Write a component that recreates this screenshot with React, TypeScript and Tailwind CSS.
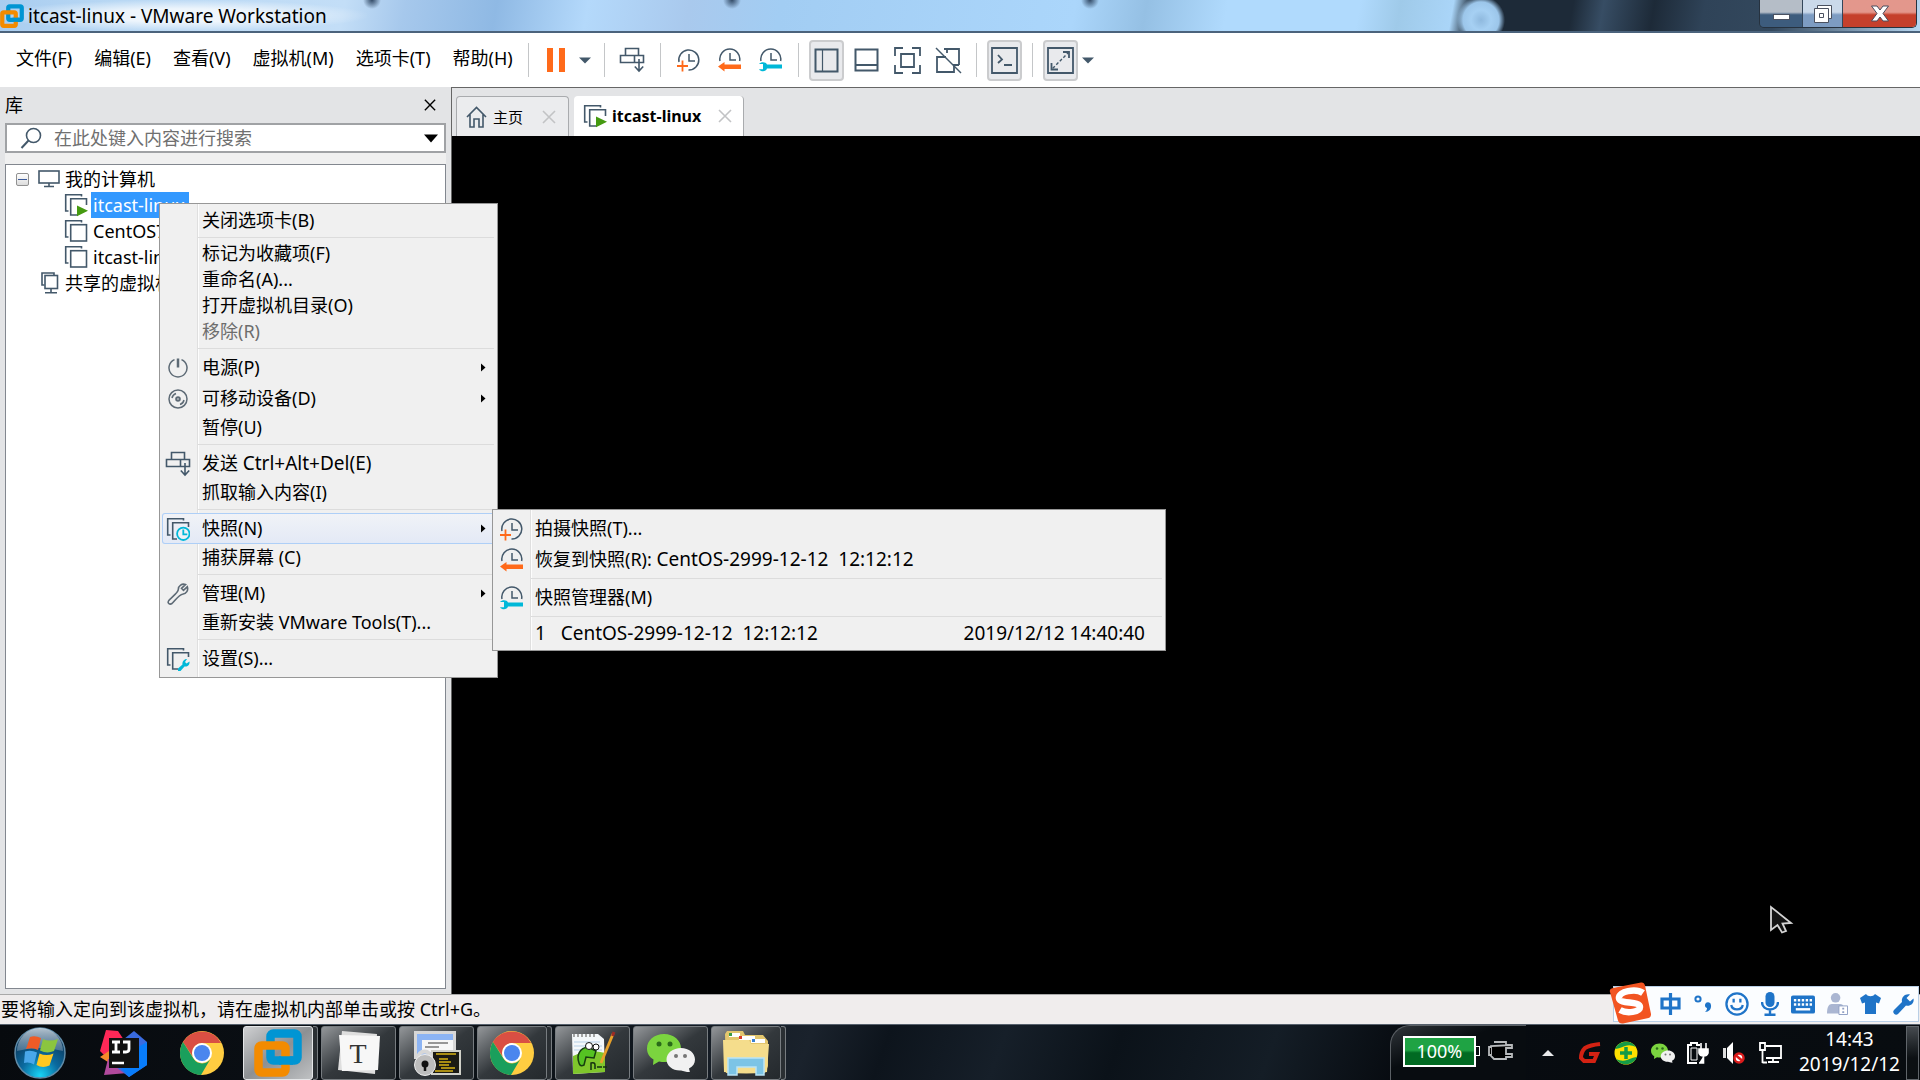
import React from 'react';

const INK = '#43586a';
const ORANGE = '#ff6a1a';
const CYAN = '#00b8d8';

type IconProps = { className?: string };

/* ---------- VMware line icons ---------- */

function VmLogo({ className }: IconProps) {
  return (
    <svg viewBox="0 0 48 48" className={className} fill="none" strokeWidth="8.500" aria-hidden="true">
      <rect x="16.500" y="4.500" width="27" height="27" rx="3" stroke="#0095d3" />
      <rect x="4.500" y="16.500" width="27" height="27" rx="3" stroke="#f38b00" />
      <path d="M25 31.500h14" stroke="#0095d3" />
    </svg>
  );
}

function VmIcon({ badge, className }: { badge?: 'play' | 'clock' | 'wrench'; className?: string }) {
  return (
    <svg width="24" height="24" viewBox="0 0 24 24" className={className} fill="none" stroke={INK} strokeWidth="1.600" aria-hidden="true">
      <path d="M4.500 18H1.700V1.700H17.500V3.500" />
      {badge === 'play' && <path d="M14 22H6.700V5.700H22.500V12" />}
      {badge === 'clock' && <path d="M11 22H6.700V5.700H22.500V10" />}
      {badge === 'wrench' && <path d="M12 22H6.700V5.700H22.500V10" />}
      {!badge && <rect x="6.700" y="5.700" width="15.800" height="16.300" />}
      {badge === 'play' && <path d="M13 12.500 24 17.800 13 23.200Z" fill="#459a10" stroke="none" />}
      {badge === 'clock' && (
        <g stroke={CYAN} strokeWidth="1.800">
          <circle cx="17.300" cy="16.800" r="6.200" fill="#eef1f6" />
          <path d="M17.300 12.500v4.800h4" />
        </g>
      )}
      {badge === 'wrench' && (
        <path d="M12 21.500 16.500 17.500C16 14.500 18 12 21 12l-2 3 1.500 1.500L23.500 14.500C24 18 21.500 20 18.500 19.500L14.500 24h-2.500Z" fill={CYAN} stroke="none" />
      )}
    </svg>
  );
}

function MonitorIcon() {
  return (
    <svg width="22" height="18" viewBox="0 0 22 18" fill="none" stroke={INK} strokeWidth="1.600" aria-hidden="true">
      <rect x="1" y="1" width="20" height="12" />
      <path d="M11 13v3M6 16.500h10" />
    </svg>
  );
}

function SharedIcon() {
  return (
    <svg width="18" height="22" viewBox="0 0 18 22" fill="none" stroke={INK} strokeWidth="1.600" aria-hidden="true">
      <path d="M3.500 13H1V1h12v2.500" />
      <rect x="4" y="3.500" width="12.500" height="13" />
      <path d="M10 17v3.500M4 20.800h12" />
    </svg>
  );
}

function SendKeysIcon() {
  return (
    <svg width="26" height="26" viewBox="0 0 26 26" fill="none" stroke={INK} strokeWidth="1.600" aria-hidden="true">
      <path d="M6.500 8.500V1.500h13v7M1.500 8.500h23v7h-23zM15.500 8.500v7M20 12v11M15.800 19.500 20 24l4.200-4.500" />
    </svg>
  );
}

function ClockIcon({ kind }: { kind: 'add' | 'revert' | 'manage' }) {
  return (
    <svg width="24" height="24" viewBox="0 0 24 24" fill="none" stroke={INK} strokeWidth="1.500" aria-hidden="true">
      {kind === 'add' ? (
        <>
          <path d="M3 14A10 10 0 1 1 12.500 22" />
          <path d="M13 6v7h6" />
          <path d="M6.500 12.500v11M1 18h11" stroke={ORANGE} strokeWidth="1.800" />
        </>
      ) : (
        <>
          <path d="M3 13A10 10 0 1 1 22.600 13" />
          <path d="M13 5v7h6" />
        </>
      )}
      {kind === 'revert' && <path d="M1 18.500 7.500 14v2.500H24v4.500H7.500v2.500Z" fill={ORANGE} stroke="none" />}
      {kind === 'manage' && (
        <path d="M1 16C3 13.500 8 13.700 9 16.500H24v4H9C8 24 3 24.200 1 21.200H5v-5.200Z" fill={CYAN} stroke="none" />
      )}
    </svg>
  );
}

function PowerIcon() {
  return (
    <svg width="20" height="20" viewBox="0 0 20 20" fill="none" stroke="#5d6a75" strokeWidth="1.500" aria-hidden="true">
      <path d="M6.500 1.600a9 9 0 1 0 7 0" />
      <path d="M10 .5v9" strokeWidth="2.500" />
    </svg>
  );
}

function DiscIcon() {
  return (
    <svg width="20" height="20" viewBox="0 0 20 20" fill="none" stroke="#5d6a75" strokeWidth="1.500" aria-hidden="true">
      <circle cx="10" cy="10" r="9" />
      <circle cx="10" cy="10" r="1.800" strokeWidth="2" />
      <path d="M4 9a6 6 0 0 1 4-4.500M16 11a6 6 0 0 1-4 4.500" />
    </svg>
  );
}

function WrenchIcon() {
  return (
    <svg width="22" height="22" viewBox="0 0 22 22" fill="none" stroke="#5d6a75" strokeWidth="1.600" aria-hidden="true">
      <path d="M18.500 1.500C15 .3 11.300 2.500 11.300 6.500c0 3.500-8.500 9-9.800 11.500-1.200 2.300 1.200 4 3.500 2.500 2.500-2 7-9 10.500-9.300 4-.2 6-4 4.800-7.500L16.500 7.300l-2-2z" />
    </svg>
  );
}

function Caret({ className }: IconProps) {
  return (
    <svg width="12" height="7" viewBox="0 0 12 7" className={className} aria-hidden="true">
      <path d="M0 .5h12L6 6.500Z" fill="currentColor" />
    </svg>
  );
}

function Cross({ className, size = 14 }: IconProps & { size?: number }) {
  return (
    <svg width={size} height={size} viewBox="0 0 14 14" className={className} fill="none" stroke="currentColor" strokeWidth="1.600" aria-hidden="true">
      <path d="M1 1l12 12M13 1 1 13" />
    </svg>
  );
}

/* ---------- Title bar ---------- */

function TitleBar() {
  return (
    <header className="flex h-[33px] shrink-0 justify-between overflow-hidden border-b-2 border-[#4b637c] bg-[radial-gradient(circle_at_1481px_20px,#8fb9de_0,#a6d0f3_10px,#9cc6ea_18px,transparent_24px),radial-gradient(ellipse_at_760px_24px,#3f9b96_0,#5aa6b8_9px,transparent_15px),radial-gradient(circle_at_372px_0px,#324a66_0,transparent_9px),radial-gradient(circle_at_732px_0px,#324a66_0,transparent_9px),radial-gradient(circle_at_1090px_0px,#324a66_0,transparent_9px),radial-gradient(ellipse_at_403px_28px,#5b9bd0_0,transparent_12px),radial-gradient(ellipse_at_1120px_30px,#4d8cc4_0,transparent_14px),linear-gradient(100deg,#a9cdf0_0,#b9d8f4_120px,#c3def7_340px,#a6c8ec_400px,#8fb9e4_490px,#b4d9fb_580px,#a9c9ed_680px,#a2cdf3_770px,#abd6fb_1060px,#95c0e4_1130px,#b0dafd_1210px,#b0dafd_1340px,#9fcae9_1380px,#aad5f8_1432px,#1d2a38_1450px,#1d2a38_1550px,#374d64_1580px,#1d2a38_1630px,#2f4358_1680px,#33485d_1750px,#bcdcf6_1900px)]">
      <div className="flex items-center bg-[radial-gradient(ellipse_at_center,rgba(255,255,255,0.75)_30%,transparent_72%)] pr-10">
        <VmLogo className="size-6" />
        <h1 className="ml-1 text-[19px] leading-6 whitespace-nowrap text-black">itcast-linux - VMware Workstation</h1>
      </div>
      <div className="mr-[3px] flex h-7 overflow-hidden rounded-b-[5px] border border-t-0 border-[#26323f]">
        <button aria-label="最小化" className="flex w-[43px] items-end justify-center border-r border-[#33465a] bg-linear-to-b from-[#b5bdc7] from-45% to-[#3d5c7d] to-55% pb-[7px]">
          <span className="h-[6px] w-[17px] border border-[#4a5160] bg-white" />
        </button>
        <button aria-label="还原" className="flex w-10 items-center justify-center border-r border-[#33465a] bg-linear-to-b from-[#cad9ea] from-45% to-[#7d9cc2] to-55%">
          <svg width="20" height="20" viewBox="0 0 20 20" fill="#fff" stroke="#4a5160" aria-hidden="true">
            <path d="M4.500 1.500h14v13h-14z" />
            <path fillRule="evenodd" d="M1.500 4.500h14v14h-14zM6.500 9.500v4h4v-4z" />
          </svg>
        </button>
        <button aria-label="关闭" className="flex w-[73px] items-center justify-center bg-linear-to-b from-[#e3978c] from-45% to-[#c5402c] to-55%">
          <svg width="18" height="17" viewBox="0 0 18 17" fill="#fff" stroke="#4a4a5a" aria-hidden="true">
            <path d="M.5 1H6l3 4 3-4h5.500L12 8.500l5.500 7.500H12l-3-4-3 4H.5L6 8.500Z" />
          </svg>
        </button>
      </div>
    </header>
  );
}

/* ---------- Menu and tool bar ---------- */

const MENUS = ['文件(F)', '编辑(E)', '查看(V)', '虚拟机(M)', '选项卡(T)', '帮助(H)'];

function Divider() {
  return <span className="h-[34px] w-px bg-[#c4c6c8]" />;
}

function Tool({ label, pressed, children }: { label: string; pressed?: boolean; children: React.ReactNode }) {
  return (
    <button
      aria-label={label}
      className={
        pressed
          ? 'flex h-[41px] w-[35px] items-center justify-center rounded-[4px] border-2 border-[#cbccce] bg-[#e9eaed]'
          : 'flex h-[41px] w-[26px] items-center justify-center'
      }
    >
      {children}
    </button>
  );
}

function MenuBar() {
  return (
    <div className="flex h-[54px] shrink-0 items-center bg-white text-[#43586a]">
      <nav className="flex gap-[22px] pb-1 pl-4 text-lg leading-6 text-black">
        {MENUS.map((m) => (
          <button key={m} className="whitespace-nowrap">{m}</button>
        ))}
      </nav>
      <div className="ml-[15px] flex items-center">
        <Divider />
        <button aria-label="暂停虚拟机" className="ml-[18px] flex h-6 gap-[6px]">
          <span className="w-[6px] bg-[#ff6a1a]" />
          <span className="w-[6px] bg-[#ff6a1a]" />
        </button>
        <button aria-label="电源选项" className="mr-[13px] ml-[14px]"><Caret /></button>
        <Divider />
        <div className="mr-[15px] ml-[14px]"><Tool label="发送 Ctrl+Alt+Del"><SendKeysIcon /></Tool></div>
        <Divider />
        <div className="mr-[15px] ml-[14px] flex gap-[15px]">
          <Tool label="拍摄快照"><ClockIcon kind="add" /></Tool>
          <Tool label="恢复快照"><ClockIcon kind="revert" /></Tool>
          <Tool label="快照管理器"><ClockIcon kind="manage" /></Tool>
        </div>
        <Divider />
        <div className="mr-[14px] ml-[10px] flex gap-[10px]">
          <Tool label="显示库" pressed>
            <svg width="25" height="25" viewBox="0 0 25 25" className="shrink-0" fill="none" stroke={INK} aria-hidden="true">
              <path d="M1.500 1.500h22v22h-22z" strokeWidth="2" /><path d="M8.500 1v23" strokeWidth="1.200" />
            </svg>
          </Tool>
          <div className="flex gap-[15px]">
            <Tool label="显示缩略图">
              <svg width="25" height="24" viewBox="0 0 25 24" className="shrink-0" fill="none" stroke={INK} strokeWidth="2" aria-hidden="true">
                <path d="M1.500 1.500h22v21h-22zM1 17h23" />
              </svg>
            </Tool>
            <Tool label="全屏">
              <svg width="27" height="27" viewBox="0 0 27 27" className="shrink-0" fill="none" stroke={INK} strokeWidth="1.800" aria-hidden="true">
                <path d="M1 9V1h8M18 1h8v8M26 18v8h-8M9 26H1v-8M7 7h13v13H7z" />
              </svg>
            </Tool>
            <Tool label="Unity 模式">
              <svg width="27" height="27" viewBox="0 0 27 27" className="shrink-0" fill="none" stroke={INK} strokeWidth="1.800" aria-hidden="true">
                <path d="M9 2h15v16M12 6V2M10 10H2v15h17v-6M6 10h5M18 18h6" /><path d="M1 1l25 25" strokeWidth="1.500" />
              </svg>
            </Tool>
          </div>
        </div>
        <Divider />
        <div className="mx-[10px]">
          <Tool label="控制台视图" pressed>
            <svg width="27" height="27" viewBox="0 0 27 27" className="shrink-0" fill="none" stroke={INK} strokeWidth="1.800" aria-hidden="true">
              <path d="M1 1h25v25H1zM7 8l4 4.500L7 16M13 18h8" />
            </svg>
          </Tool>
        </div>
        <Divider />
        <div className="mr-1 ml-[10px]">
          <Tool label="拉伸" pressed>
            <svg width="27" height="27" viewBox="0 0 27 27" className="shrink-0" fill="none" stroke={INK} strokeWidth="1.800" aria-hidden="true">
              <path d="M1 1h25v25H1zM16 5h6v6M4.500 16v6.500H11" /><path d="M22 5 5 22" strokeDasharray="3 2" strokeWidth="1.400" />
            </svg>
          </Tool>
        </div>
        <button aria-label="拉伸选项"><Caret /></button>
      </div>
    </div>
  );
}

/* ---------- Library ---------- */

function Library() {
  return (
    <aside className="flex w-[451px] shrink-0 flex-col bg-[#e3e4e6] px-[5px] pb-[5px]">
      <div className="flex h-9 shrink-0 items-center justify-between pr-[10px]">
        <h2 className="text-lg leading-6">库</h2>
        <button aria-label="关闭库"><Cross size={12} /></button>
      </div>
      <div className="flex h-[30px] shrink-0 items-center border-2 border-[#a0a2a5] bg-white pr-[6px] pl-[13px]">
        <svg width="22" height="22" viewBox="0 0 22 22" fill="none" stroke={INK} strokeWidth="1.600" aria-hidden="true">
          <circle cx="13.500" cy="8.500" r="7" /><path d="M8.500 13.500 1.500 21" strokeWidth="2" />
        </svg>
        <input aria-label="搜索" placeholder="在此处键入内容进行搜索" className="ml-3 min-w-0 flex-1 text-lg leading-6 outline-none placeholder:text-[#707070]" />
        <button aria-label="搜索选项"><svg width="14" height="9" viewBox="0 0 14 9" aria-hidden="true"><path d="M0 .5h14L7 8.500Z" /></svg></button>
      </div>
      <div className="h-[11px] shrink-0 bg-[#f0f0f0]" />
      <ul className="flex-1 border border-[#82878f] bg-white pt-px text-lg leading-[26px]">
        <li>
          <div className="flex h-[26px] items-center pl-[10px]">
            <button aria-label="折叠" className="flex size-[13px] items-center justify-center rounded-[2px] border border-[#919191] bg-linear-to-b from-white to-[#dcdcdc]">
              <span className="h-px w-[9px] bg-[#3b5a9a]" />
            </button>
            <span className="mr-[5px] ml-[9px]"><MonitorIcon /></span>
            我的计算机
          </div>
          <ul className="pl-[58px]">
            <li className="flex h-[26px] items-center">
              <VmIcon badge="play" />
              <span className="ml-[3px] bg-[#3399ff] pr-1 pl-[2px] text-white">itcast-linux</span>
            </li>
            <li className="flex h-[26px] items-center"><VmIcon /><span className="ml-[5px]">CentOS7</span></li>
            <li className="flex h-[26px] items-center"><VmIcon /><span className="ml-[5px]">itcast-linux2</span></li>
          </ul>
        </li>
        <li className="flex h-[26px] items-center pl-[35px]"><SharedIcon /><span className="ml-[6px]">共享的虚拟机</span></li>
      </ul>
    </aside>
  );
}

/* ---------- Console area ---------- */

function Console() {
  return (
    <main className="flex min-w-0 flex-1 flex-col border-t border-l border-[#666] bg-[#e3e4e6]">
      <div className="flex h-12 shrink-0 items-end gap-[5px] pl-1">
        <div className="flex h-10 w-[113px] items-center rounded-t-[4px] border border-b-0 border-[#a9abae] bg-[#ebecee] pl-[9px]">
          <svg width="21" height="22" viewBox="0 0 21 22" fill="none" stroke={INK} strokeWidth="1.600" aria-hidden="true">
            <path d="M1 11 10.500 1.500 20 11M4 8.500V21h4v-8h5v8h4V8.500" />
          </svg>
          <button className="ml-[6px] text-[15px] leading-6">主页</button>
          <button aria-label="关闭主页" className="ml-[19px] text-[#c2c3c5]"><Cross /></button>
        </div>
        <div className="flex h-10 w-[170px] items-center rounded-t-[4px] border-r border-[#a9abae] bg-white pl-[9px]">
          <VmIcon badge="play" />
          <button className="ml-[5px] text-base leading-6 font-bold whitespace-nowrap">itcast-linux</button>
          <button aria-label="关闭 itcast-linux" className="ml-[17px] text-[#c2c3c5]"><Cross /></button>
        </div>
      </div>
      <div className="relative flex-1 bg-black">
        <svg width="26" height="30" viewBox="0 0 26 30" className="absolute right-[125px] bottom-[59px]" fill="#141414" stroke="#d4d4d4" strokeWidth="1.800" aria-hidden="true">
          <path d="M2 2v23l6.500-5 4.500 7.500 4-1.500-3.500-7.500L22 18Z" />
        </svg>
      </div>
    </main>
  );
}

/* ---------- Context menus ---------- */

type MenuRowProps = { icon?: React.ReactNode; size?: 'sm' | 'md' | 'lg'; disabled?: boolean; arrow?: boolean; active?: boolean; children: React.ReactNode };

const ROW_H = { sm: 'h-[26px]', md: 'h-[27px]', lg: 'h-[31px]' };

function MenuRow({ icon, size = 'md', disabled, arrow, active, children }: MenuRowProps) {
  return (
    <button
      role="menuitem"
      disabled={disabled}
      className={`${ROW_H[size]} ${active ? 'rounded-[3px] bg-linear-to-b from-[#f1f3f7] to-[#e3e9f6] ring-1 ring-[#aecff7] ring-inset' : ''} ${disabled ? 'text-[#6d6d6d]' : ''} flex w-full items-center pr-[9px] text-left whitespace-pre`}
    >
      <span className="flex w-[31px] shrink-0 items-center justify-center">{icon}</span>
      <span className="ml-[9px] flex flex-1 items-baseline pb-[2px]">{children}</span>
      {arrow && <svg width="5" height="9" viewBox="0 0 5 9" aria-hidden="true"><path d="M0 .5v8l4.500-4Z" /></svg>}
    </button>
  );
}

function MenuLine() {
  return <hr className="my-[3px] mr-px ml-[36px] h-px border-0 bg-[#dcdcdc]" />;
}

const MENU_BOX =
  'border border-[#979797] bg-[linear-gradient(90deg,#f0f0f0_37px,#dfdfdf_37px,#dfdfdf_38px,#fdfdfd_38px,#fdfdfd_39px,#f0f0f0_39px)] px-[2px] py-[3px] text-lg leading-6 text-black';

function ContextMenu() {
  return (
    <div role="menu" className={`${MENU_BOX} absolute top-[203px] left-[159px] w-[339px]`}>
      <MenuRow>关闭选项卡(B)</MenuRow>
      <MenuLine />
      <MenuRow size="sm">标记为收藏项(F)</MenuRow>
      <MenuRow size="sm">重命名(A)...</MenuRow>
      <MenuRow size="sm">打开虚拟机目录(O)</MenuRow>
      <MenuRow size="sm" disabled>移除(R)</MenuRow>
      <MenuLine />
      <MenuRow size="lg" icon={<PowerIcon />} arrow>电源(P)</MenuRow>
      <MenuRow size="lg" icon={<DiscIcon />} arrow>可移动设备(D)</MenuRow>
      <MenuRow>暂停(U)</MenuRow>
      <MenuLine />
      <MenuRow size="lg" icon={<SendKeysIcon />}>
        <span>{'发送 '}</span>
        <span className="text-[19px]">Ctrl+Alt+Del(E)</span>
      </MenuRow>
      <MenuRow>抓取输入内容(I)</MenuRow>
      <MenuLine />
      <div className="relative">
        <MenuRow size="lg" icon={<VmIcon badge="clock" />} arrow active>快照(N)</MenuRow>
        <div role="menu" className={`${MENU_BOX} absolute -top-1 left-[330px] w-[674px]`}>
          <MenuRow size="lg" icon={<ClockIcon kind="add" />}>拍摄快照(T)...</MenuRow>
          <MenuRow size="lg" icon={<ClockIcon kind="revert" />}>
            <span>{'恢复到快照(R): '}</span>
            <span className="text-[19px]">{'CentOS-2999-12-12  12:12:12'}</span>
          </MenuRow>
          <MenuLine />
          <MenuRow size="lg" icon={<ClockIcon kind="manage" />}>快照管理器(M)</MenuRow>
          <MenuLine />
          <MenuRow>
            <span className="text-[19px]">{'1   CentOS-2999-12-12  12:12:12'}</span>
            <span className="mr-[9px] ml-auto text-[19px]">2019/12/12 14:40:40</span>
          </MenuRow>
        </div>
      </div>
      <MenuRow>捕获屏幕 (C)</MenuRow>
      <MenuLine />
      <MenuRow size="lg" icon={<WrenchIcon />} arrow>管理(M)</MenuRow>
      <MenuRow>重新安装 VMware Tools(T)...</MenuRow>
      <MenuLine />
      <MenuRow size="lg" icon={<VmIcon badge="wrench" />}>设置(S)...</MenuRow>
    </div>
  );
}

/* ---------- Input method bar ---------- */

function ImeBar() {
  return (
    <div className="absolute right-px bottom-[58px] flex h-9 items-center border border-[#b9cfe6] bg-[#fbfdff] pr-1 text-[#1f74c8]">
      <svg width="43" height="42" viewBox="0 0 43 42" className="-mt-[6px] -mb-1 -ml-[5px]" aria-hidden="true">
        <path d="M1 10Q0 7 4 6L32 .5q3-.5 4 3L42 32q.500 3-2.500 4L14 41.500q-4 .5-5-3Z" fill="#f25421" />
        <path d="M34 11C27 6 9 9 10 16.500c1 6 21 2 21 8.500 0 5-13 7-20 3" fill="none" stroke="#fff" strokeWidth="6.500" />
      </svg>
      <div className="ml-2 flex items-center gap-3">
        <button aria-label="中文">
          <svg width="21" height="22" viewBox="0 0 21 22" fill="none" stroke="currentColor" strokeWidth="3.200" aria-hidden="true"><path d="M2 6h17v9H2zM10.500 0v22" /></svg>
        </button>
        <button aria-label="标点">
          <svg width="20" height="18" viewBox="0 0 20 18" fill="none" stroke="currentColor" strokeWidth="2" aria-hidden="true">
            <circle cx="5" cy="4" r="2.600" /><path d="M12 17c4 0 6.500-3 6-7a3 3 0 1 0-4 3c0 2-1 3-2 4Z" fill="currentColor" stroke="none" />
          </svg>
        </button>
        <button aria-label="表情">
          <svg width="24" height="24" viewBox="0 0 25 25" fill="none" stroke="currentColor" strokeWidth="2.400" aria-hidden="true">
            <circle cx="12.500" cy="12.500" r="11" /><path d="M9 7v4M16 7v4M6.500 13.500c1 6 11 6 12 0" />
          </svg>
        </button>
        <button aria-label="语音">
          <svg width="18" height="24" viewBox="1 0 18 24" fill="none" stroke="currentColor" strokeWidth="2.400" aria-hidden="true">
            <rect x="5.500" y="0" width="9" height="15" rx="4.500" fill="currentColor" stroke="none" /><path d="M2 10c0 10 16 10 16 0M10 18v4.500M4.500 22.800h11" />
          </svg>
        </button>
        <button aria-label="软键盘">
          <svg width="24" height="19" viewBox="0 0 25 19" aria-hidden="true">
            <rect width="25" height="19" rx="2" fill="currentColor" />
            <path d="M3 5h19M3 9.500h19" stroke="#fff" strokeWidth="2.500" strokeDasharray="2.500 1.600" /><path d="M5 14.500h15" stroke="#fff" strokeWidth="2.500" />
          </svg>
        </button>
        <button aria-label="用户">
          <svg width="21" height="24" viewBox="0 0 22 24" fill="#aab6d2" aria-hidden="true">
            <circle cx="9" cy="5.500" r="5" /><path d="M0 22c0-7 2-10 5-10h9c3 0 4 3 4 10Z" />
            <path d="M12.500 14h9v9h-9z" fill="#fff" stroke="#8f9fc4" /><path d="M17 16v1.800M17 19.500v1.800" stroke="#8f9fc4" strokeWidth="2" />
          </svg>
        </button>
        <button aria-label="皮肤">
          <svg width="21" height="20" viewBox="0 0 21 20" fill="currentColor" aria-hidden="true"><path d="M0 4 6 0c2 3 7 3 9 0l6 4-2 5.500-3-1V20H5V8.500l-3 1Z" /></svg>
        </button>
        <button aria-label="工具">
          <svg width="21" height="21" viewBox="0 0 21 21" fill="currentColor" aria-hidden="true">
            <path d="M17 .5 13.500 4l3.500 3.500L20.500 4.500C21.500 9 17.500 12.500 13 11.500L5 20c-2.500 2.500-6.500-1.500-4-4L9 8C8 3.500 12-.8 17 .5Z" />
          </svg>
        </button>
      </div>
    </div>
  );
}

/* ---------- Task bar ---------- */

function ChromeIcon() {
  return (
    <svg width="44" height="44" viewBox="0 0 44 44" aria-hidden="true">
      <circle cx="22" cy="22" r="22" fill="#ffcd41" />
      <path d="M2.950 11A22 22 0 0 1 41.050 12H22a10 10 0 0 0-9 14Z" fill="#d94f43" />
      <path d="M2.950 11A22 22 0 0 0 21 44l10-17a10 10 0 0 1-17.500.5Z" fill="#1a9f5c" />
      <circle cx="22" cy="22" r="10" fill="#fff" />
      <circle cx="22" cy="22" r="8" fill="#4a86ee" />
    </svg>
  );
}

function WeChatIcon({ className }: IconProps) {
  return (
    <svg viewBox="0 0 48 38" className={className} aria-hidden="true">
      <path d="M17 0C7 0 0 6.500 0 14.500c0 5 2.500 8.500 6.500 11L6 31l6-3.500C25 30 34 24 34 14.500 34 6.500 27 0 17 0Z" fill="#7bd43f" />
      <circle cx="12" cy="10" r="2.500" fill="#2a6a1a" /><circle cx="23" cy="10" r="2.500" fill="#2a6a1a" />
      <path d="M34 14c-8 0-14.500 5-14.500 11.500S26 37 34 36.500l6 1.500 3 .5-1-4c4-2 6-5 6-9C48 19 42 14 34 14Z" fill="#f1f1f1" />
      <circle cx="29" cy="22" r="2" fill="#777" /><circle cx="38" cy="22" r="2" fill="#777" />
    </svg>
  );
}

function StartOrb() {
  return (
    <svg width="52" height="52" viewBox="0 0 52 52" aria-hidden="true">
      <defs>
        <radialGradient id="orb" cx=".5" cy=".95" r=".85">
          <stop offset="0" stopColor="#17d5f7" /><stop offset=".45" stopColor="#0b6a9f" /><stop offset="1" stopColor="#0c3152" />
        </radialGradient>
        <linearGradient id="orbShine" x2="0" y2="1"><stop offset="0" stopColor="#d2dde6" stopOpacity=".85" /><stop offset="1" stopColor="#6d8da8" stopOpacity=".6" /></linearGradient>
      </defs>
      <circle cx="26" cy="26" r="25" fill="url(#orb)" stroke="#5f8ba8" strokeWidth="1.500" />
      <path d="M3 24A23 23 0 0 1 49 24Q26 18 3 24Z" fill="url(#orbShine)" />
      <path d="M16 10q5-2 11 1l-3 12q-5-3-12-1Z" fill="#ee5b26" />
      <path d="M29 12q6 3 15 0l-4 12q-7 3-14-.500Z" fill="#8bc53f" />
      <path d="M11 24.500q6-2 12 1l-3 12q-5-3-10-1.500Z" fill="#49a7ea" />
      <path d="M25.500 26.500q7 3 14 0l-4 12q-7 3-13-.5Z" fill="#ffc820" />
    </svg>
  );
}

function IntelliJIcon() {
  return (
    <svg width="48" height="48" viewBox="0 0 48 48" aria-hidden="true">
      <path d="M6 1 18 2 26 14 14 36 0 22Z" fill="#fe2857" />
      <path d="M0 28 12 20 16 34 8 33Z" fill="#f68b2a" />
      <path d="M8 30 20 30 28 44 4 46Z" fill="#b14a9d" />
      <path d="M34 2 47 13V36L29 48 16 38 24 10Z" fill="#3a6be0" />
      <path d="M38 18 47 13v23L29 48l-8-9Z" fill="#087cfa" />
      <rect x="9" y="9" width="30" height="30" fill="#111" />
      <path d="M12 13h8M12 23h8M16 13v10M23 13h6v7q0 3-3 3h-3" fill="none" stroke="#fff" strokeWidth="2.800" />
      <path d="M12 34h12" stroke="#fff" strokeWidth="2.500" />
    </svg>
  );
}

function TyporaIcon() {
  return (
    <svg width="46" height="46" viewBox="0 0 46 46" aria-hidden="true">
      <path d="M6 1 41 4 39 44 2 40Z" fill="#dedede" /><path d="M3 5 44 6 42 40 6 41Z" fill="#f7f7f7" />
      <text x="22" y="33" textAnchor="middle" fontSize="28" fill="#333" fontFamily="Liberation Serif, serif">T</text>
    </svg>
  );
}

function LockToolIcon() {
  return (
    <svg width="48" height="46" viewBox="0 0 48 46" aria-hidden="true">
      <path d="M1 1h42v28H1z" fill="#d7d7d7" /><path d="M4 4h36v22H4z" fill="#8cb4f4" />
      <path d="M9 10h31v12H9z" fill="#f6f6f6" /><path d="M15 13h20M12 17h14" stroke="#777" strokeWidth="1.500" />
      <path d="M18 20h30v25H18z" fill="#d0d0c8" /><path d="M20 22h26v21H20z" fill="#1b1a14" />
      <path d="M23 24h20M26 29h9M26 32h12M26 35h10M28 38h14M22 41h18" stroke="#d9b413" strokeWidth="1.600" />
      <path d="M5 30v-2a6.500 6.500 0 0 1 13 0v2" fill="none" stroke="#d7d7d7" strokeWidth="4" />
      <circle cx="12" cy="35" r="10.500" fill="#bdbdbd" stroke="#eee" /><circle cx="12" cy="34" r="3.500" fill="#111" /><path d="M12 34v7" stroke="#111" strokeWidth="2.500" />
    </svg>
  );
}

function NotepadIcon() {
  return (
    <svg width="46" height="44" viewBox="0 0 46 44" aria-hidden="true">
      <path d="M2 3h26l6 5 1 33-32 2Z" fill="#f4f8fb" />
      <path d="M3 25q15-7 32-3v19L3 43Z" fill="#7fc62c" />
      <path d="M4 3v3M8 3v3M12 3v3M16 3v3M20 3v3M24 3v3" stroke="#888" strokeWidth="1.500" />
      <path d="M4 11h26M4 15h28M4 19h28" stroke="#b5cfe6" />
      <path d="M9 32c-3-8 1-15 9-16l8 4-2 7-8-1-2 8q-4 2-5-2" fill="#55c322" stroke="#173d10" strokeWidth="1.500" />
      <circle cx="19" cy="15" r="3.500" fill="#fff" stroke="#111" /><circle cx="26" cy="16" r="3" fill="#fff" stroke="#111" />
      <path d="M21 39v-7q4-1 4 2v4M27 36h5M33 36h4" stroke="#143010" strokeWidth="1.500" fill="none" />
      <path d="M31 32 43 3" stroke="#e8a12a" strokeWidth="2.800" /><path d="M42.500 5 44 1" stroke="#9c2b25" strokeWidth="3" />
    </svg>
  );
}

function ExplorerIcon() {
  return (
    <svg width="48" height="46" viewBox="0 0 48 46" aria-hidden="true">
      <path d="M3 4 5 1h16l2 4h18l5 6v25l-3 7H4Z" fill="#e3c66e" />
      <path d="M7 3h11v4H7zM17 6h16v4H17zM29 9h14v4H29z" fill="#fff" />
      <path d="M7 3h3v3H7z" fill="#3b9b46" /><path d="M17 6h3v3h-3z" fill="#da3a28" /><path d="M30 9h3v3h-3z" fill="#3b80cf" />
      <path d="M1 10h26l2 4h18l-2 28q-20 3-43 0Z" fill="#f5dd8c" />
      <path d="M6 28h36v17h-8V37H15v8H6Z" fill="#7cc4e6" stroke="#b9e4f6" strokeWidth="1.500" />
    </svg>
  );
}

function TaskButton({ label, active, stacked, children }: { label: string; active?: boolean; stacked?: boolean; children: React.ReactNode }) {
  return (
    <div className="flex h-[54px] w-[75px]">
      <button
        aria-label={label}
        className={`${active ? 'border-[#e4e6e8] bg-linear-to-br from-[#cfd0d2] via-[#8d9093] to-[#bfc1c3]' : 'border-[#777c80] bg-linear-to-br from-[#94979a] via-[#33383c] to-[#24292d]'} flex flex-1 items-center justify-center rounded-[3px] border`}
      >
        {children}
      </button>
      {stacked && <span className="w-[5px] rounded-r-[3px] border border-l-0 border-[#777c80] bg-[#2a2f33]" />}
    </div>
  );
}

function TaskBar() {
  return (
    <footer className="flex h-14 shrink-0 items-center border-t border-[#56606c] bg-[linear-gradient(110deg,#070a0e_0,#0d1319_30%,#1a222c_42%,#0d141c_46%,#161f29_52%,#0b1219_58%,#141d26_66%,#070b10_73%,#080c10_100%)] text-white">
      <div className="flex items-center pl-[14px]">
        <button aria-label="开始"><StartOrb /></button>
        <button aria-label="IntelliJ IDEA" className="ml-[34px]"><IntelliJIcon /></button>
        <button aria-label="Chrome" className="ml-8"><ChromeIcon /></button>
      </div>
      <div className="ml-[19px] flex gap-[3px]">
        <TaskButton label="VMware Workstation" active stacked><VmLogo className="size-12" /></TaskButton>
        <TaskButton label="Typora"><TyporaIcon /></TaskButton>
        <TaskButton label="SecureCRT"><LockToolIcon /></TaskButton>
        <TaskButton label="Chrome 窗口" stacked><ChromeIcon /></TaskButton>
        <TaskButton label="Notepad++"><NotepadIcon /></TaskButton>
        <TaskButton label="微信"><WeChatIcon className="h-[38px] w-12" /></TaskButton>
        <TaskButton label="资源管理器" stacked><ExplorerIcon /></TaskButton>
      </div>
      <div className="ml-auto flex h-full items-center">
        <div className="flex h-full items-center rounded-tl-[20px] border-t border-l border-[#5a5f64] bg-linear-to-br from-[#30353a] to-[#080c10] to-40% pr-3 pb-1 pl-3">
          <div className="flex h-[31px] w-[73px] items-center justify-center border-2 border-white bg-linear-to-b from-[#1fa344] from-45% to-[#016a22] to-55% text-lg leading-6">100%</div>
          <span className="h-[10px] w-1 border border-l-0 border-white" />
          <svg width="26" height="20" viewBox="0 0 26 20" className="ml-2" fill="#000" stroke="#b8babc" strokeWidth="1.800" aria-hidden="true">
            <path d="M6 1h12v3h6M24 4v3h-6v6h6v3h-6v2H6l-3-3V5Z" /><path d="M3 6H1v8h2" />
          </svg>
        </div>
        <button aria-label="显示隐藏的图标" className="ml-4">
          <svg width="12" height="6" viewBox="0 0 12 6" aria-hidden="true"><path d="M6 0l6 6H0Z" fill="#e9eaeb" /></svg>
        </button>
        <svg width="22" height="22" viewBox="0 0 22 22" className="ml-[25px]" fill="none" stroke="#d32213" strokeWidth="4" aria-hidden="true">
          <path d="M21 2q-10 1-15 4-4 4-4 10l3 3h10l3-7h-8" />
        </svg>
        <svg width="24" height="24" viewBox="0 0 24 24" className="ml-[13px]" aria-hidden="true">
          <circle cx="12" cy="12" r="11.500" fill="#ffe000" />
          <path d="M1 8A12 12 0 0 1 22 6q-6-3-11-1-7 3-10 3ZM23 16A12 12 0 0 1 2 18q6 3 11 1 7-3 10-3Z" fill="#149a47" />
          <path d="M12 6v12M6 12h12" stroke="#149a47" strokeWidth="3.500" />
        </svg>
        <WeChatIcon className="ml-[13px] h-5 w-6" />
        <svg width="22" height="24" viewBox="0 0 22 24" className="ml-3" fill="none" stroke="#fff" strokeWidth="2" aria-hidden="true">
          <path d="M10 22H1V4h3V2h6v2h3" /><path d="M4 7h6v12H4z" strokeWidth="1" />
          <path d="M12 8h9v4q-1 3-4.500 3T12 12ZM14 8V2M19 8V2M16.500 15v7H12" fill="#fff" strokeWidth="1.600" />
        </svg>
        <svg width="22" height="24" viewBox="0 0 22 24" className="ml-[14px]" aria-hidden="true">
          <path d="M0 7h3v10H0z" fill="#ddd" /><path d="M4 7l6-6v22l-6-6Z" fill="#fff" />
          <circle cx="16" cy="17" r="4.500" fill="#fff" stroke="#dc1c1c" strokeWidth="2.500" /><path d="M12.500 14 19.500 20" stroke="#dc1c1c" strokeWidth="2.500" />
        </svg>
        <svg width="24" height="22" viewBox="0 0 24 22" className="ml-[14px]" fill="none" stroke="#fff" strokeWidth="1.800" aria-hidden="true">
          <path d="M7 4h15v12H7M1 1h5v7H1zM3.500 8v13M3.500 20.500H8M14 16v3M9 20h11" />
        </svg>
        <div className="ml-4 pb-px text-center text-[19px] leading-[25px] whitespace-nowrap">
          <div>14:43</div>
          <div>2019/12/12</div>
        </div>
        <button aria-label="显示桌面" className="mr-px ml-[6px] h-[54px] w-[13px] border border-[#60656a] bg-linear-to-b from-[#464b50] to-[#0c1013] to-60%" />
      </div>
    </footer>
  );
}

export default function App() {
  return (
    <div className="relative flex h-screen flex-col overflow-hidden bg-[#e3e4e6] font-['Noto_Sans','Noto_Sans_CJK_SC',sans-serif] text-black">
      <TitleBar />
      <MenuBar />
      <div className="flex min-h-0 flex-1">
        <Library />
        <Console />
      </div>
      <div className="flex h-[30px] shrink-0 items-center border-t border-[#a9a9a9] bg-[#f0eded] pb-px pl-px text-lg leading-6">
        要将输入定向到该虚拟机，请在虚拟机内部单击或按 Ctrl+G。
      </div>
      <TaskBar />
      <ImeBar />
      <ContextMenu />
    </div>
  );
}
